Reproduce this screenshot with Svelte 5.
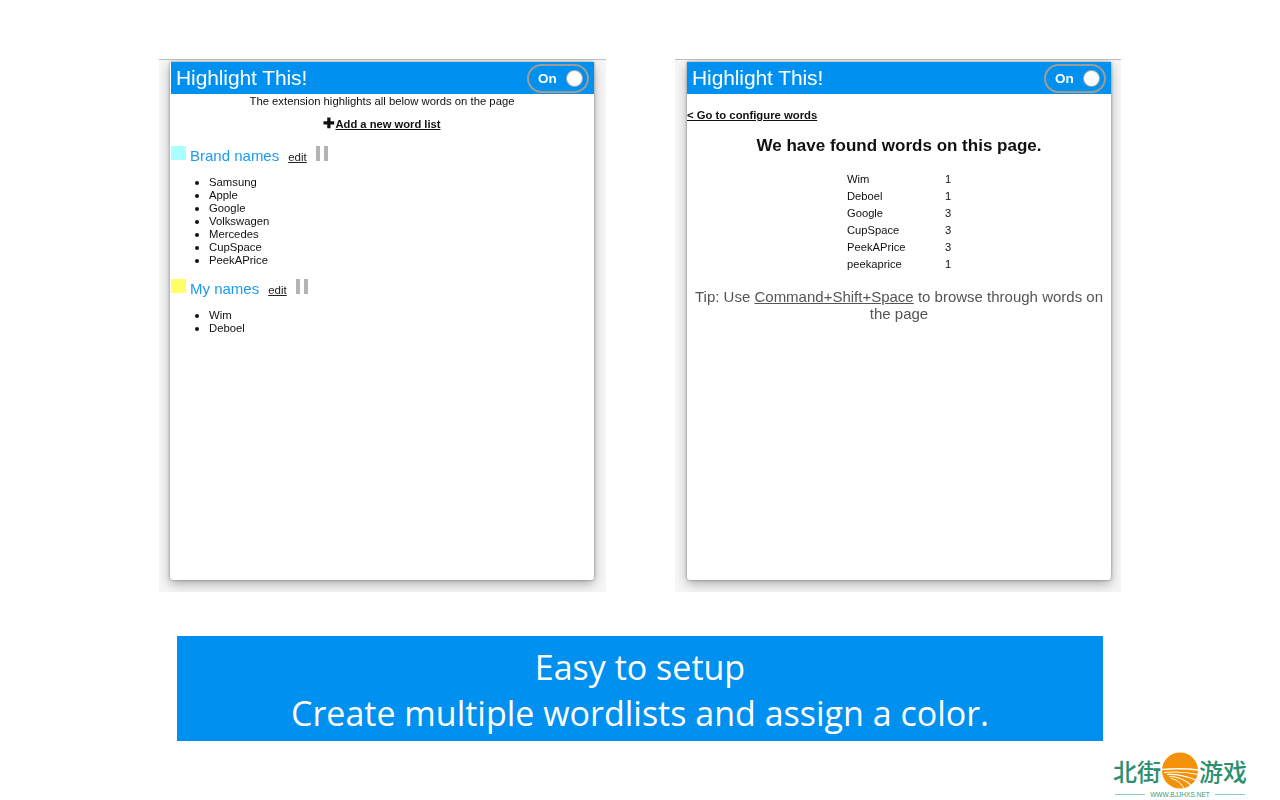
<script>
  const lists = [
    { name: 'Brand names', color: '#aaffff', words: ['Samsung', 'Apple', 'Google', 'Volkswagen', 'Mercedes', 'CupSpace', 'PeekAPrice'] },
    { name: 'My names', color: '#ffff66', words: ['Wim', 'Deboel'] }
  ];
  const found = [['Wim', 1], ['Deboel', 1], ['Google', 3], ['CupSpace', 3], ['PeekAPrice', 3], ['peekaprice', 1]];
</script>

{#snippet header()}
  <header class="bar">
    <span class="title">Highlight This!</span>
    <span class="toggle"><b>On</b><i class="knob"></i></span>
  </header>
{/snippet}

<main class="stage">
  <div class="shots">
    <section class="shot left">
      <div class="win">
        {@render header()}
        <p class="intro">The extension highlights all below words on the page</p>
        <p class="add"><span class="plus">✚</span><a href="#add">Add a new word list</a></p>
        {#each lists as l}
          <div class="group">
            <i class="swatch" style="background:{l.color}"></i>
            <span class="gname">{l.name}</span>
            <a class="edit" href="#edit">edit</a>
            <span class="pause"><i></i><i></i></span>
          </div>
          <ul>
            {#each l.words as w}<li>{w}</li>{/each}
          </ul>
        {/each}
      </div>
    </section>
    <section class="shot right">
      <div class="win">
        {@render header()}
        <a class="back" href="#back">&lt; Go to configure words</a>
        <h2>We have found words on this page.</h2>
        <table>
          <tbody>
            {#each found as f}
              <tr><td class="w">{f[0]}</td><td class="n">{f[1]}</td></tr>
            {/each}
          </tbody>
        </table>
        <p class="tip">Tip: Use <u>Command+Shift+Space</u> to browse through words on the page</p>
      </div>
    </section>
  </div>
  <div class="banner">
    <div>Easy to setup</div>
    <div>Create multiple wordlists and assign a color.</div>
  </div>
  <div class="logo">
    <div class="logo-top">
      <span>北街</span>
      <svg width="38" height="37" viewBox="0 0 38 37" aria-hidden="true">
        <circle cx="19" cy="18.5" r="18" fill="#f39208" />
        <g fill="none" stroke="#fff">
          <path d="M1 17.5 C12 16.5 26 16.5 38 18" stroke-width="1.5" />
          <path d="M3 20.5 C14 19.5 26 20 37 22.5" stroke-width="1.2" />
          <path d="M6 22.5 C15 22 25 24 35 28" stroke-width="1.2" />
          <path d="M8 24.5 C15 24.5 23 27 30 33" stroke-width="1.1" />
          <path d="M10 26.5 C14 27 19 30 23 36" stroke-width="1" />
        </g>
      </svg>
      <span>游戏</span>
    </div>
    <div class="logo-url"><i></i><span>WWW.BJJHXS.NET</span><i></i></div>
  </div>
</main>

<style>
  :global(body) { margin: 0; background: #fff; }
  .stage { position: relative; width: 1280px; height: 800px; overflow: hidden; padding-top: 59px; box-sizing: border-box; font-family: "Liberation Sans", Arial, sans-serif; color: #111; }
  .shots { display: flex; margin-left: 159px; gap: 69px; }
  .shot { width: 447px; height: 533px; box-sizing: border-box; background: #f6f6f6; border-top: 1px solid #bdbdbd; overflow: hidden; padding: 2px 12px 0 11px; }
  .shot.right { width: 446px; padding-left: 12px; padding-right: 10px; }
  .win { height: 518px; background: #fff; border-radius: 0 0 3px 3px; box-shadow: 0 4px 12px rgba(0,0,0,.3), 0 0 3px rgba(0,0,0,.4); filter: blur(.4px); }
  .bar { height: 32px; background: #0090f0; display: flex; align-items: center; justify-content: space-between; padding: 0 5px 0 5px; margin-left: 1px; }
  .right .bar { margin-left: 0; }
  .title { color: #fff; font-size: 21px; letter-spacing: -.1px; }
  .toggle { height: 25px; border: 2px solid #a09c94; border-radius: 15px; display: flex; align-items: center; justify-content: space-between; padding: 0 5px 0 9px; box-sizing: content-box; width: 44px; color: #fff; }
  .toggle b { font-size: 13.5px; }
  .knob { width: 15px; height: 15px; border-radius: 50%; background: #fff; box-shadow: 0 0 0 1px #aaa; }
  p { margin: 0; }
  a { color: inherit; }
  .intro { font-size: 11.3px; line-height: 13px; text-align: center; margin-top: 1px; }
  .add { font-size: 11.2px; font-weight: bold; text-align: center; margin-top: 8px; line-height: 15px; }
  .plus { font-size: 14px; }
  .group { display: flex; align-items: flex-start; height: 20px; margin-top: 14px; padding-left: 1px; }
  ul + .group { margin-top: 12px; }
  .swatch { width: 15px; height: 14px; display: block; }
  .gname { color: #1a9bf5; font-size: 15px; line-height: 17px; margin-left: 4px; margin-top: 1px; }
  .edit { font-size: 11.5px; line-height: 13px; margin-left: 9px; margin-top: 5px; color: #222; }
  .pause { display: flex; gap: 4px; margin-left: 9px; }
  .pause i { width: 4px; height: 15px; background: #b4b4b4; display: block; }
  ul { margin: 10px 0 0; padding: 0 0 0 39px; font-size: 11.3px; line-height: 13px; list-style: none; }
  li { position: relative; }
  li::before { content: ""; position: absolute; left: -14px; top: 5px; width: 4px; height: 4px; border-radius: 50%; background: #111; }
  .back { display: block; font-size: 11.3px; font-weight: bold; margin-top: 15px; line-height: 13px; }
  h2 { margin: 14px 0 0; font-size: 17px; line-height: 20px; text-align: center; }
  table { border-collapse: collapse; margin: 15px 0 0 160px; font-size: 11.2px; }
  td { padding: 0; height: 17px; line-height: 13px; }
  .w { width: 98px; }
  .tip { margin: 15px 5px 0; font-size: 15px; line-height: 17px; text-align: center; color: #555; }
  .banner { margin: 44px 0 0 177px; width: 926px; height: 105px; background: #0090f0; color: #fff; font-family: "Open Sans", sans-serif; font-size: 34px; line-height: 46px; text-align: center; box-sizing: border-box; padding-top: 8px; }
  .logo { position: absolute; left: 1113px; top: 752px; width: 134px; }
  .logo-top { display: flex; align-items: center; justify-content: space-between; height: 37px; color: #2d8f70; font-family: "Noto Sans CJK SC", sans-serif; font-weight: 500; font-size: 24px; line-height: 37px; }
  .logo-url { display: flex; align-items: center; gap: 5px; height: 8px; margin-top: 1px; padding: 0 2px; color: #3a9a7c; font-family: "Liberation Sans", sans-serif; font-size: 6.6px; white-space: nowrap; }
  .logo-url i { flex: 1; height: 1px; background: #8fcfba; }
</style>
